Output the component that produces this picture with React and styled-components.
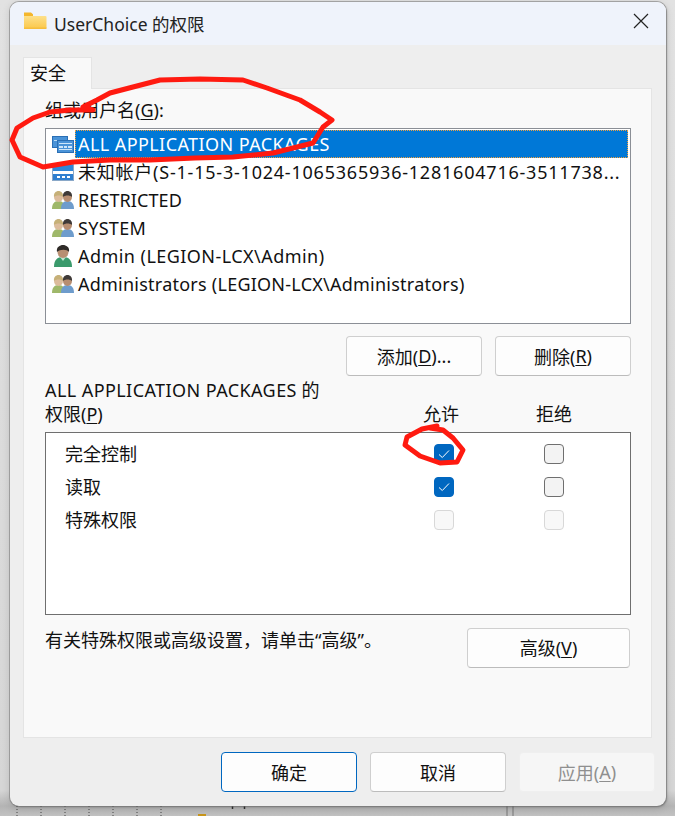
import React from "react";
import styled, { createGlobalStyle } from "styled-components";

const Global = createGlobalStyle`
  html, body { margin: 0; padding: 0; background: #d8d8d8; }
  * { box-sizing: border-box; }
`;
const FONT = `"Noto Sans", "Noto Sans CJK SC", sans-serif`;

const Desktop = styled.div`
  position: relative; width: 675px; height: 816px; overflow: hidden;
  padding: 2px 9px 10px 10px;
  background: linear-gradient(180deg, #e2e2e2 0, #d6d6d6 790px, #b4b4b4 806px, #c2c2c2 816px);
  font-family: ${FONT}; font-size: 18px; color: #111;
`;
const Backdrop = styled.svg`position: absolute; left: 0; top: 0;`;
const Window = styled.div`
  position: relative; width: 656px; height: 804px; display: flex; flex-direction: column;
  background: #eeeeee; border-radius: 9px; overflow: hidden;
  box-shadow: 0 0 0 1px rgba(120,120,120,.55), 1px 1px 2px rgba(0,0,0,.25), 0 2px 8px rgba(0,0,0,.15);
`;
const TitleBar = styled.div`
  height: 43px; flex: none; display: flex; align-items: center; padding: 0 17px 0 13px;
  background: #eff3fb; color: #222;
`;
const TitleIcon = styled.span`display: flex; margin-bottom: ${p => p.$lift}px;`;
const TitleText = styled.span`margin-left: 7px; font-size: 17.5px; flex: 1;`;
const Content = styled.div`flex: 1; display: flex; flex-direction: column; padding: 12px 0 0 13px;`;
const Tab = styled.div`
  width: 69px; height: 32px; margin-bottom: -1px; position: relative; z-index: 1; padding-left: 6px;
  line-height: 30px; background: #f9f9f9; border: 1px solid #e4e4e4; border-bottom: none;
`;
const Panel = styled.div`
  width: 629px; height: 650px; padding: 9px 20px 0 21px; background: #f9f9f9; border: 1px solid #e4e4e4;
`;
const Label = styled.div`line-height: 24px; height: 30px;`;
const ListBox = styled.div`
  width: 586px; height: 196px; background: #fff; border: 1px solid #8b8f96; padding: 1px 2px;
`;
const Row = styled.div`display: flex; align-items: center; height: 28px; padding-left: 3px;`;
const RowText = styled.span`
  flex: 1; min-width: 0; padding-left: 3px; line-height: 28px; white-space: nowrap;
  letter-spacing: ${p => p.$track || 0}px;
  color: ${p => (p.$sel ? "#fff" : "#111")};
  background: ${p => (p.$sel ? "#0078d7" : "transparent")};
  outline: ${p => (p.$sel ? "1px dotted #f0a040" : "none")}; outline-offset: -1px;
`;
const ButtonRow = styled.div`display: flex; justify-content: flex-end; gap: 13px; margin-top: 12px; width: 586px;`;
const Btn = styled.div`
  width: ${p => p.$w || 136}px; height: 40px; display: flex; align-items: center; justify-content: center;
  border-radius: 4px; background: ${p => (p.$off ? "#f6f6f6" : "#fdfdfd")};
  border: 1px solid ${p => (p.$primary ? "#0067c0" : p.$off ? "#efefef" : "#cfcfcf")};
  border-bottom-color: ${p => (p.$primary ? "#0067c0" : p.$off ? "#efefef" : "#bcbcbc")};
  color: ${p => (p.$off ? "#8f8f8f" : "#111")};
`;
const PermHead = styled.div`
  display: grid; grid-template-columns: 378px 36px 77px 36px; width: 586px; margin-top: 2px; line-height: 24px; height: 54px;
`;
const HeadTitle = styled.div`grid-column: 1; line-height: 24px; white-space: nowrap;`;
const Tracked = styled.span`letter-spacing: .42px;`;
const HeadCol = styled.div`padding-top: 24px; white-space: nowrap;`;
const PermBox = styled.div`
  width: 586px; height: 183px; padding-top: 4px; background: #fff; border: 1px solid #6f6f6f;
`;
const PermRow = styled.div`
  display: grid; grid-template-columns: 369px 20px 90px 20px; height: 33px; align-items: center; padding-left: 19px;
  color: #111;
`;
const PermName = styled.span`margin-top: -2px;`;
const Check = styled.div`
  width: 20px; height: 20px; border-radius: 4px; display: flex; align-items: center; justify-content: center;
  background: ${p => (p.$on ? "#0067c0" : p.$off ? "#f8f8f8" : "#f3f3f3")};
  border: 1px solid ${p => (p.$on ? "#0067c0" : p.$off ? "#d8d8d8" : "#6f6f6f")};
`;
const BottomRow = styled.div`
  display: flex; align-items: flex-start; justify-content: space-between; width: 585px; margin-top: 13px; line-height: 24px;
`;
const Footer = styled.div`
  display: flex; justify-content: flex-end; gap: 13px; padding: 14px 11px 0 0;
`;
const Scribble = styled.svg`position: absolute; left: 0; top: 0; pointer-events: none;`;
const U = styled.span`text-decoration: underline; text-underline-offset: 2px; text-decoration-thickness: 1px;`;

const Folder = () => (
  <svg width="24" height="20" viewBox="0 0 24 20">
    <defs>
      <linearGradient id="fold" x1="0" y1="0" x2="0" y2="1">
        <stop offset="0" stopColor="#fde08a" />
        <stop offset="1" stopColor="#fbc94e" />
      </linearGradient>
    </defs>
    <path d="M1 2.500h7l2 1.800V7H1z" fill="#f4b62c" />
    <path d="M1 6h21.500a1 1 0 0 1 1 1v11H1z" fill="url(#fold)" />
    <path d="M1 17.500h22.500V19H1z" fill="#f6bd3c" />
  </svg>
);
const NetGroup = () => (
  <svg width="24" height="20" viewBox="0 0 24 20">
    <rect x="1.500" y="2.500" width="15" height="11" fill="#4a93d8" stroke="#2a6fb5" />
    <path d="M3 6h12v1H3z" fill="#bcdcf6" />
    <rect x="6.500" y="6.500" width="16" height="12" fill="#4a93d8" stroke="#2a6fb5" />
    <path d="M8 9h13v1H8zM8 12h4v2H8zM13 12h3v2h-3zM17 12h4v2h-4zM8 15h13v1H8z" fill="#cfe6fa" />
  </svg>
);
const NetSolo = () => (
  <svg width="24" height="20" viewBox="0 0 24 20">
    <rect x="1.500" y="2.500" width="21" height="16" fill="#fff" stroke="#8aa8c8" />
    <rect x="2" y="3" width="20" height="6" fill="#2f86d8" />
    <rect x="2" y="12" width="20" height="6" fill="#2f7fd0" />
    <path d="M6 14h3v2H6zM11 14h3v2h-3zM16 14h3v2h-3z" fill="#fff" />
  </svg>
);
const Person = ({ x, hair, body, skin }) => (
  <g transform={`translate(${x} 0)`}>
    <path d="M1 19c0-5 2-8 6.500-8S14 14 14 19z" fill={body} />
    <ellipse cx="7.500" cy="7" rx="4.500" ry="5" fill={skin} />
    <path d="M3 7C2.500 3 5 1 7.500 1S12.500 3 12 7C10 5 5 5 3 7z" fill={hair} />
  </g>
);
const Group = () => (
  <svg width="24" height="20" viewBox="0 0 24 20">
    <Person x={0} hair="#c6b078" body="#9fb86a" skin="#dcbc9c" />
    <Person x={9} hair="#3f3a38" body="#6e9ccc" skin="#b78d70" />
  </svg>
);
const User = () => (
  <svg width="24" height="24" viewBox="0 0 24 24">
    <path d="M3 23c0-7 3-10 9-10s9 3 9 10z" fill="#3a9a6c" />
    <path d="M9 13l3 4 3-4z" fill="#bfe6d0" />
    <ellipse cx="12" cy="8" rx="5.500" ry="6" fill="#b88f72" />
    <path d="M6 8C5 3 9 1 12 1s7 2 6 7c-2-3-9-3-12 0z" fill="#2f2b28" />
  </svg>
);
const Tick = ({ c = "#fff" }) => (
  <svg width="12" height="10" viewBox="0 0 12 10"><path d="M1 5.500l3.300 3L11 1.500" fill="none" stroke={c} strokeWidth="1" /></svg>
);
const Close = () => (
  <svg width="16" height="16" viewBox="0 0 16 16"><path d="M1 1l14 14M15 1L1 15" stroke="#222" strokeWidth="1.200" /></svg>
);

const rows = [
  [<NetSolo />, "未知帐户(S-1-15-3-1024-1065365936-1281604716-3511738...", 0.78],
  [<Group />, "RESTRICTED", 0.1],
  [<Group />, "SYSTEM", 0.3],
  [<User />, "Admin (LEGION-LCX\\Admin)", 0.45],
  [<Group />, "Administrators (LEGION-LCX\\Administrators)", 0.24],
];

export default function App() {
  return (
    <Desktop>
      <Global />
      <Backdrop width="675" height="816" viewBox="0 0 675 816">
        <path d="M17 806v10M41 806v10M65 806v10M89 806v10M113 806v10M137 806v10M161 806v10" stroke="#444" strokeDasharray="1 2" />
        <rect x="198" y="814" width="8" height="2" fill="#c8961c" />
        <path d="M232.500 806v3M244.500 806v3" stroke="#333" strokeWidth="1.500" />
        <path d="M507 806v10M513 806v10" stroke="#777" />
      </Backdrop>
      <Window>
        <TitleBar>
          <TitleIcon $lift={7}><Folder /></TitleIcon>
          <TitleText>UserChoice 的权限</TitleText>
          <TitleIcon $lift={6}><Close /></TitleIcon>
        </TitleBar>
        <Content>
          <Tab>安全</Tab>
          <Panel>
            <Label>组或用户名(<U>G</U>):</Label>
            <ListBox>
              <Row><NetGroup /><RowText $sel $track={0.42}>ALL APPLICATION PACKAGES</RowText></Row>
              {rows.map(([icon, text, track]) => <Row key={text}>{icon}<RowText $track={track}>{text}</RowText></Row>)}
            </ListBox>
            <ButtonRow>
              <Btn>添加(<U>D</U>)...</Btn>
              <Btn>删除(<U>R</U>)</Btn>
            </ButtonRow>
            <PermHead>
              <HeadTitle><Tracked>ALL APPLICATION PACKAGES</Tracked> 的<br />权限(<U>P</U>)</HeadTitle>
              <HeadCol>允许</HeadCol>
              <span />
              <HeadCol>拒绝</HeadCol>
            </PermHead>
            <PermBox>
              <PermRow><PermName>完全控制</PermName><Check $on><Tick /></Check><span /><Check /></PermRow>
              <PermRow><PermName>读取</PermName><Check $on><Tick /></Check><span /><Check /></PermRow>
              <PermRow><PermName>特殊权限</PermName><Check $off /><span /><Check $off /></PermRow>
            </PermBox>
            <BottomRow>
              <span>{"有关特殊权限或高级设置\uFF0C请单击“高级”。"}</span>
              <Btn $w={163}>高级(<U>V</U>)</Btn>
            </BottomRow>
          </Panel>
          <Footer>
            <Btn $primary>确定</Btn>
            <Btn>取消</Btn>
            <Btn $off>应用(<U>A</U>)</Btn>
          </Footer>
        </Content>
      </Window>
      <Scribble width="675" height="816" viewBox="0 0 675 816" fill="none" stroke="#ff1a10" strokeWidth="5" strokeLinejoin="round" strokeLinecap="round">
        <path d="M83 107 L93 110 L70 110 L50 112 L33 118 L17 128 L12 140 L20 157 L43 167 L73 162 L110 160 L150 160 L195 158 L233 157 L273 153 L313 143 L323 127 L332 120 L320 112 L300 100 L267 88 L243 80 L200 79 L160 80 L133 87 L110 93 L97 100 L83 107" />
        <path d="M437 426 L422 429 L407 437 L405 445 L420 456 L440 463 L457 462 L463 450 L453 438 L443 430 L430 428" />
      </Scribble>
    </Desktop>
  );
}
